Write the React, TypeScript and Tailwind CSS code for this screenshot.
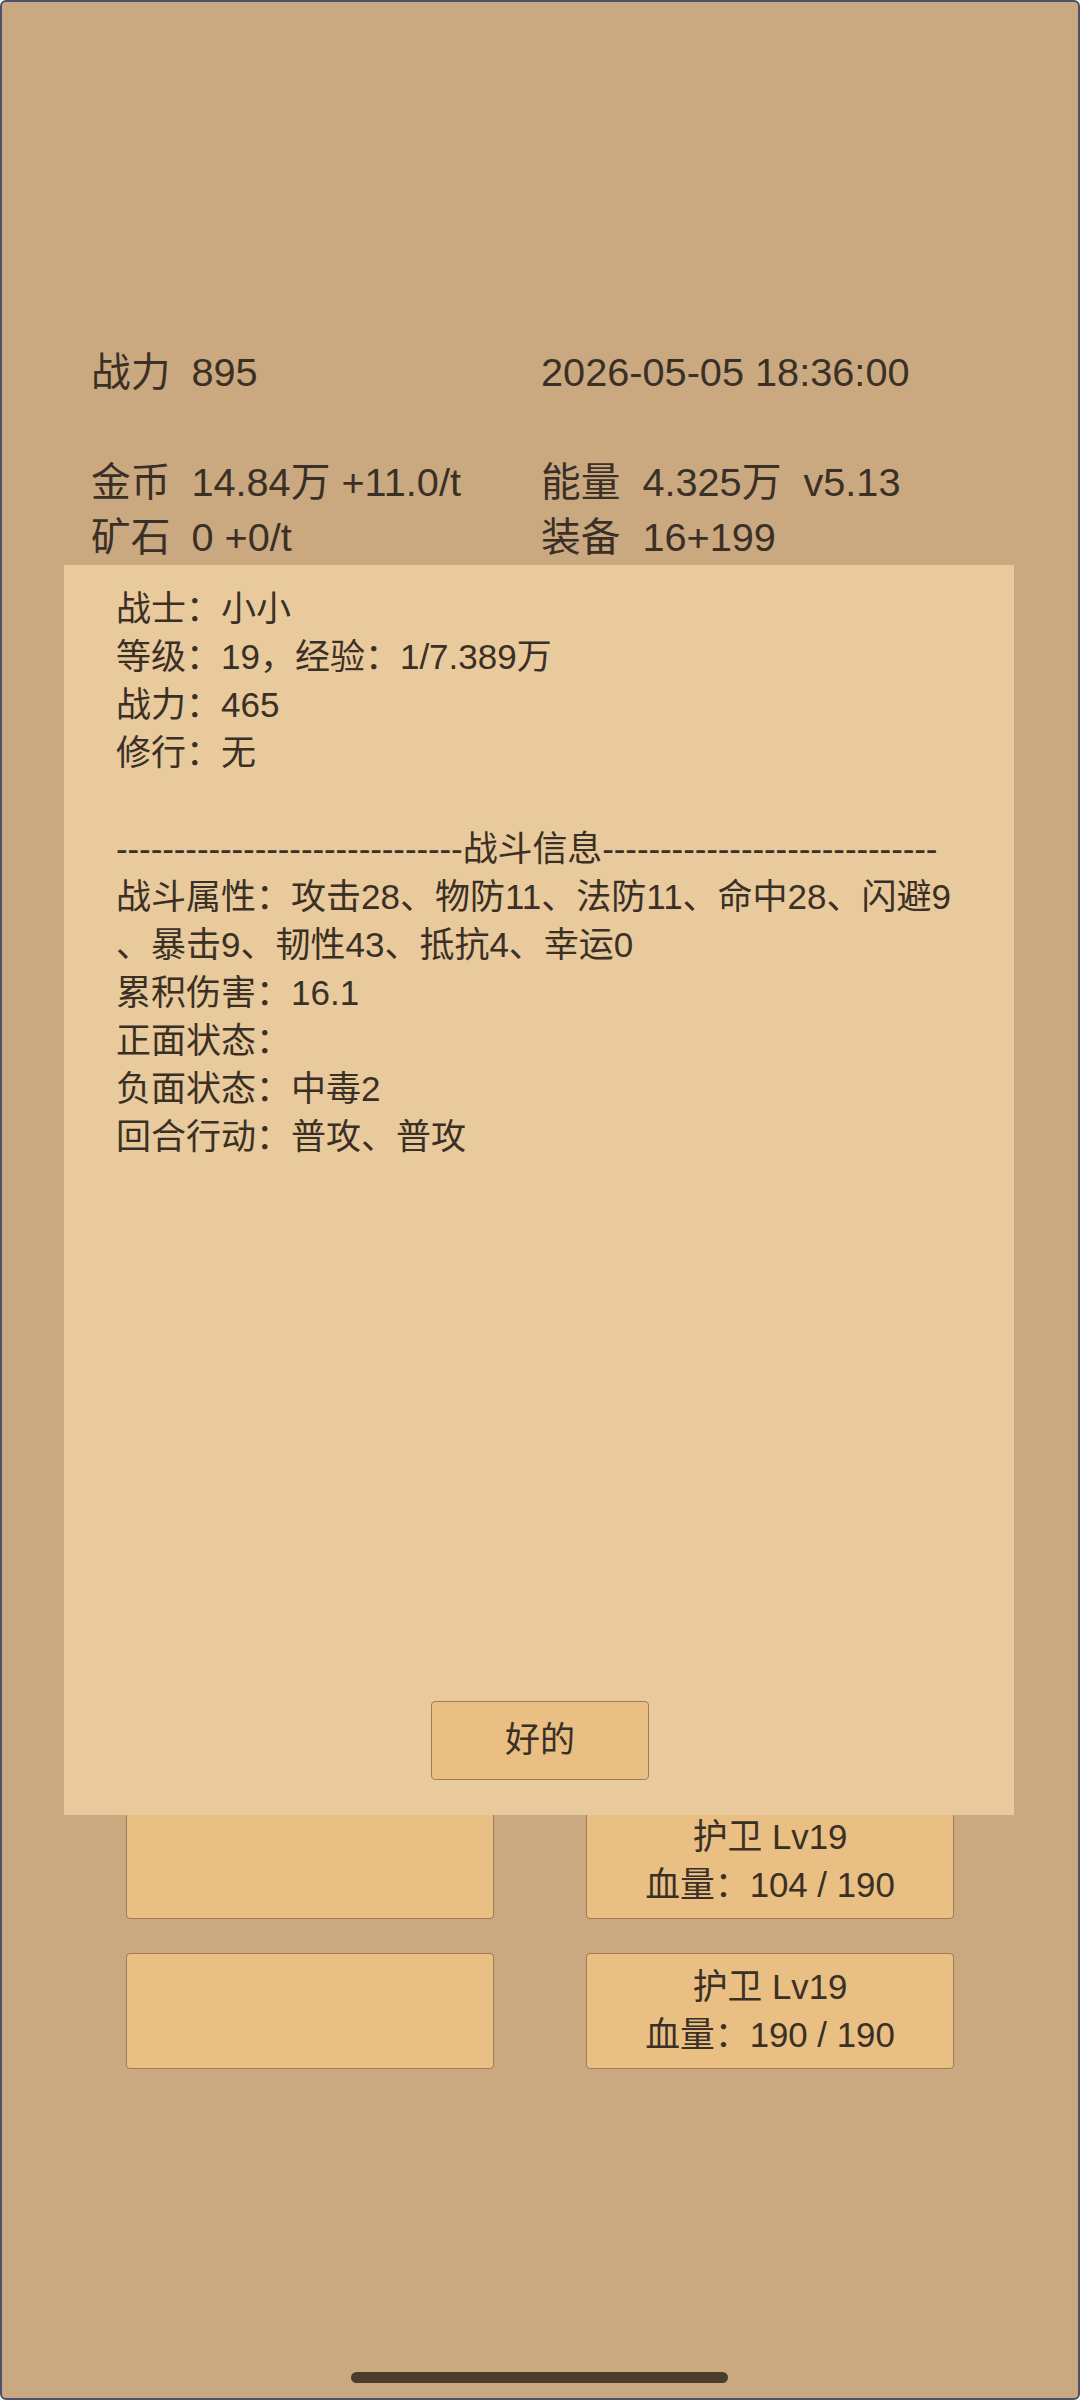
import React from "react";

const FONT = { fontFamily: '"Liberation Sans", "Noto Sans CJK SC", sans-serif' };

function Card({ title, hp }: { title?: string; hp?: string }) {
  return (
    <div className="h-[116px] w-[368px] rounded-[4px] border border-[#9f7c57] bg-[#e9bf84] flex flex-col items-center justify-center text-[34.8px] leading-[48px] text-[#3a3026]">
      {title ? <div>{title}</div> : null}
      {hp ? <div>{hp}</div> : null}
    </div>
  );
}

export default function App() {
  const lines = [
    "战士：小小",
    "等级：19，经验：1/7.389万",
    "战力：465",
    "修行：无",
    "\u00a0",
    "-".repeat(30) + "战斗信息" + "-".repeat(29),
    "战斗属性：攻击28、物防11、法防11、命中28、闪避9",
    "、暴击9、韧性43、抵抗4、幸运0",
    "累积伤害：16.1",
    "正面状态：",
    "负面状态：中毒2",
    "回合行动：普攻、普攻",
  ];
  return (
    <div style={FONT} className="relative h-[2400px] w-[1080px] overflow-hidden rounded-[6px] border-2 border-[#4d5170] bg-[#caa981] text-[#3a3026]">
      {/* header */}
      <div className="pt-[343px] text-[39.7px] leading-[55px]">
        <div className="grid grid-cols-[450px_1fr] pl-[89px]">
          <div className="flex gap-[21px]">
            <span>战力</span>
            <span>895</span>
          </div>
          <div>2026-05-05 18:36:00</div>
          <div>&nbsp;</div>
          <div>&nbsp;</div>
          <div className="flex gap-[21px]">
            <span>金币</span>
            <span>14.84万 +11.0/t</span>
          </div>
          <div className="flex gap-[22px]">
            <span>能量</span>
            <span>4.325万</span>
            <span>v5.13</span>
          </div>
          <div className="flex gap-[21px]">
            <span>矿石</span>
            <span>0 +0/t</span>
          </div>
          <div className="flex gap-[22px]">
            <span>装备</span>
            <span>16+199</span>
          </div>
        </div>
      </div>

      {/* cards */}
      <div className="mt-[1238px] grid grid-cols-2 gap-y-[34px] gap-x-[92px] px-[124px]">
        <Card />
        <Card title="护卫 Lv19" hp="血量：104 / 190" />
        <Card />
        <Card title="护卫 Lv19" hp="血量：190 / 190" />
      </div>

      {/* modal */}
      <div className="absolute left-[62px] top-[563px] flex h-[1250px] w-[950px] flex-col bg-[#e9ca9c] pl-[52px] pr-[40px] pt-[20px]">
        <div className="text-[35px] leading-[48px] whitespace-nowrap">
          {lines.map((l, i) => (
            <div key={i} className={i === 5 ? "tracking-[-0.1px]" : ""}>
              {l}
            </div>
          ))}
        </div>
        <div className="mt-auto mb-[35px] flex justify-center pr-[10px]">
          <button className="h-[79px] w-[218px] rounded-[4px] border border-[#9f7c57] bg-[#e9bf84] text-[35px] text-[#3a3026]">
            好的
          </button>
        </div>
      </div>

      {/* home indicator */}
      <div className="absolute left-[349px] top-[2370px] h-[11px] w-[377px] rounded-full bg-[#4a3d2d]" />
    </div>
  );
}
